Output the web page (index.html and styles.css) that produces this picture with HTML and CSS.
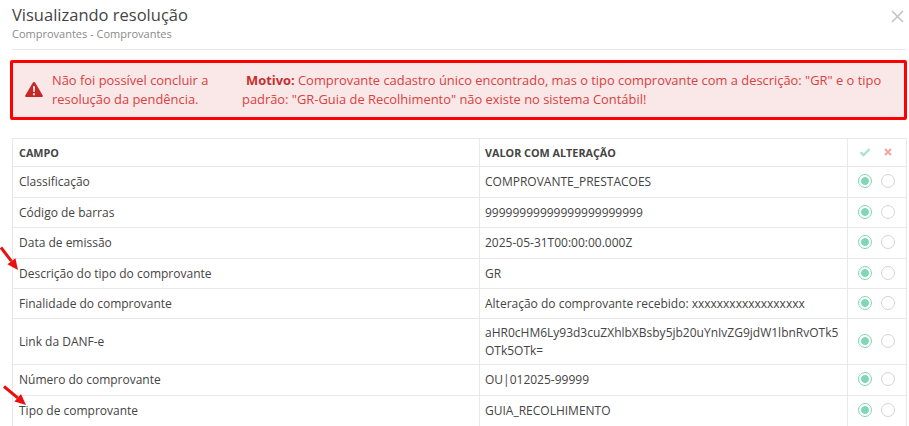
FILE: index.html
```html
<!DOCTYPE html>
<html lang="pt-BR">
<head>
  <meta charset="UTF-8">
  <title>Visualizando resolução</title>
  <link rel="stylesheet" href="styles.css">
</head>
<body>

  <div class="modal">
    <div class="modal-header">
      <div>
        <h1>Visualizando resolução</h1>
        <p class="subtitle">Comprovantes - Comprovantes</p>
      </div>
      <svg class="close" width="13" height="13" viewBox="0 0 13 13"><path d="M1 1l11 11M12 1L1 12" stroke="#c4c4c4" stroke-width="1.6" fill="none"/></svg>
    </div>

    <div class="alert">
      <svg class="alert-icon" width="18" height="17" viewBox="0 0 19 17"><path d="M9.5 0.5c.6 0 1 .3 1.3.8l7.8 13.4c.5.9 0 1.8-1 1.8H1.4c-1 0-1.5-.9-1-1.8L8.2 1.3c.3-.5.7-.8 1.3-.8z" fill="#c62828"/><path d="M8.4 5.2h2.2l-.3 6h-1.6zM8.4 12.4h2.2v2.1H8.4z" fill="#fbe9e9"/></svg>
      <div class="alert-title">Não foi possível concluir a resolução da pendência.</div>
      <div class="alert-reason"><b>Motivo:</b> Comprovante cadastro único encontrado, mas o tipo comprovante com a descrição: "GR" e o tipo padrão: "GR-Guia de Recolhimento" não existe no sistema Contábil!</div>
    </div>

    <table>
      <thead>
        <tr>
          <th class="col-field">CAMPO</th>
          <th class="col-value">VALOR COM ALTERAÇÃO</th>
          <th class="col-check">
            <div class="checks">
              <svg width="14" height="14" viewBox="0 0 14 14"><path d="M2.5 7.2l3 3 6-6.2" stroke="#a5e3cb" stroke-width="2.3" fill="none"/></svg>
              <svg width="14" height="14" viewBox="0 0 14 14"><path d="M4 4l6 6M10 4l-6 6" stroke="#f4a6a6" stroke-width="2.2" fill="none"/></svg>
            </div>
          </th>
        </tr>
      </thead>
      <tbody>
        <tr class="tall"><td>Classificação</td><td>COMPROVANTE_PRESTACOES</td><td><div class="checks"><span class="radio on"></span><span class="radio"></span></div></td></tr>
        <tr><td>Código de barras</td><td>99999999999999999999999</td><td><div class="checks"><span class="radio on"></span><span class="radio"></span></div></td></tr>
        <tr class="tall"><td>Data de emissão</td><td>2025-05-31T00:00:00.000Z</td><td><div class="checks"><span class="radio on"></span><span class="radio"></span></div></td></tr>
        <tr><td>Descrição do tipo do comprovante</td><td>GR</td><td><div class="checks"><span class="radio on"></span><span class="radio"></span></div></td></tr>
        <tr><td>Finalidade do comprovante</td><td>Alteração do comprovante recebido: xxxxxxxxxxxxxxxxxx</td><td><div class="checks"><span class="radio on"></span><span class="radio"></span></div></td></tr>
        <tr class="double"><td>Link da DANF-e</td><td class="long">aHR0cHM6Ly93d3cuZXhlbXBsby5jb20uYnIvZG9jdW1lbnRvOTk5OTk5OTk=</td><td><div class="checks"><span class="radio on"></span><span class="radio"></span></div></td></tr>
        <tr class="tall"><td>Número do comprovante</td><td>OU|012025-99999</td><td><div class="checks"><span class="radio on"></span><span class="radio"></span></div></td></tr>
        <tr class="tall"><td>Tipo de comprovante</td><td>GUIA_RECOLHIMENTO</td><td><div class="checks"><span class="radio on"></span><span class="radio"></span></div></td></tr>
      </tbody>
    </table>
  </div>

  <!-- setas vermelhas por cima da tabela -->
  <svg class="arrow arrow-one" width="20" height="26" viewBox="0 0 20 26"><path d="M1 1.5L11.4 15.2" stroke="#ea1010" stroke-width="3" fill="none"/><path d="M18 24L7.4 18.2 15.4 12.2z" fill="#ea1010"/></svg>
  <svg class="arrow arrow-two" width="26" height="23" viewBox="0 0 26 23"><path d="M1 1.5L14.7 12.8" stroke="#ea1010" stroke-width="3" fill="none"/><path d="M23 20L11.4 16.6 18 9z" fill="#ea1010"/></svg>

</body>
</html>
```

FILE: styles.css
```css
* {
  box-sizing: border-box;
  margin: 0;
  padding: 0;
}
body {
  background: #ffffff;
  color: #444;
  font-family: "Open Sans", sans-serif;
  font-size: 12px;
  height: 426px;
  overflow: hidden;
  position: relative;
}
.modal {
  padding: 0 3px 0 10px;
}
.modal-header {
  display: flex;
  justify-content: space-between;
  align-items: flex-start;
  height: 50px;
  margin-left: 2px;
  padding-top: 4px;
  border-bottom: 1px solid #e8e8e8;
}
h1 {
  font-size: 16.5px;
  font-weight: 400;
  line-height: 22px;
  color: #444;
}
.subtitle {
  font-size: 11px;
  line-height: 15px;
  color: #8a8a8a;
}
.close {
  margin: 6px 2px 0 0;
}
.alert {
  display: flex;
  align-items: center;
  height: 60px;
  width: 897px;
  margin-top: 10px;
  padding-bottom: 1px;
  border: 3px solid #ff0000;
  border-radius: 2px;
  background: #fae8e8;
  color: #d9403f;
  font-size: 12.9px;
  line-height: 18.5px;
}
.alert-icon {
  margin: -1px 0 0 12px;
  flex-shrink: 0;
}
.alert-title {
  width: 175px;
  margin-left: 9px;
  flex-shrink: 0;
}
.alert-reason {
  margin-left: 15px;
  flex: 1;
  padding-right: 10px;
  text-indent: 4px;
}
.alert-reason b {
  color: #c62f2f;
}
table {
  width: 895px;
  margin: 18px 0 0 2px;
  border-collapse: collapse;
  table-layout: fixed;
  font-size: 12px;
}
th, td {
  border: 1px solid #e8e8e8;
  padding: 0 6px;
  text-align: left;
  height: 30px;
  line-height: 18px;
}
th {
  height: 28px;
  font-weight: 700;
  font-size: 10.8px;
  color: #444;
}
th:nth-child(2), td:nth-child(2) {
  padding-left: 5px;
}
.tall td {
  height: 31px;
}
.double td {
  height: 46px;
}
.col-field {
  width: 467px;
}
.col-check {
  width: 59.5px;
}
.long {
  word-break: break-all;
}
.checks {
  display: flex;
  justify-content: center;
  gap: 9px;
  align-items: center;
  margin-top: -2px;
}
th .checks {
  margin-top: -1px;
}
.radio {
  display: block;
  width: 14px;
  height: 14px;
  border: 1.7px solid #d4d4d4;
  border-radius: 50%;
  background: #fff;
}
.radio.on {
  border-color: #7fd8b5;
  background: radial-gradient(circle, #7fd8b5 0 3.5px, #fff 4.2px);
}
.arrow {
  position: absolute;
}
.arrow-one {
  left: 0;
  top: 246px;
}
.arrow-two {
  left: 3px;
  top: 385px;
}
```
